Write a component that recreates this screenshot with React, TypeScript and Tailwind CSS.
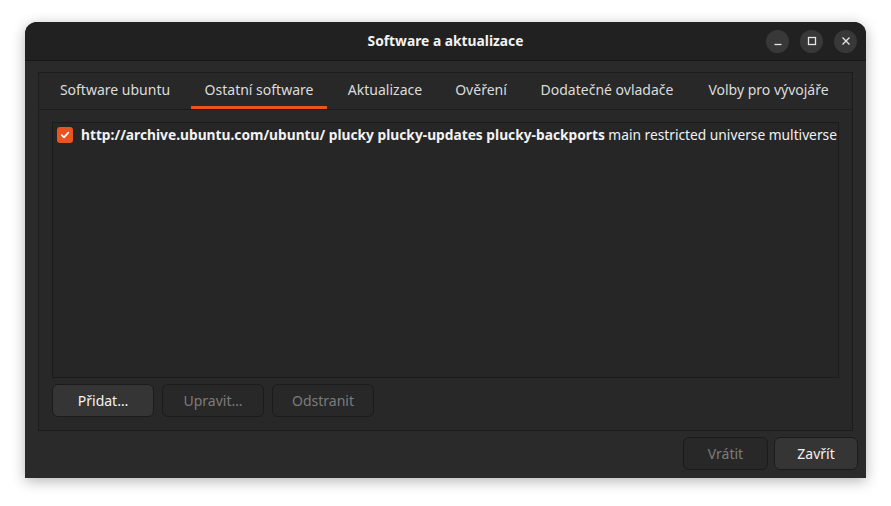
import React from 'react';

const FONT = { fontFamily: '"Noto Sans", "Open Sans", sans-serif' };

// pozice záložek podle referenčního okna (šířky v px)
const TABS: { label: string; w: number }[] = [
  { label: 'Software ubuntu', w: 136 },
  { label: 'Ostatní software', w: 136 },
  { label: 'Aktualizace', w: 100 },
  { label: 'Ověření', w: 76 },
  { label: 'Dodatečné ovladače', w: 160 },
  { label: 'Volby pro vývojáře', w: 147 },
];

function CheckIcon() {
  return (
    <svg width="10" height="10" viewBox="0 0 10 10" fill="none">
      <path d="M1.8 5.2 L4 7.3 L8.3 2.7" stroke="white" strokeWidth="1.7" strokeLinecap="round" strokeLinejoin="round" />
    </svg>
  );
}

function WinButton({ kind }: { kind: 'min' | 'max' | 'close' }) {
  return (
    <div className="w-[23px] h-[23px] rounded-full bg-[#383838] flex items-center justify-center">
      <svg width="10" height="10" viewBox="0 0 10 10" fill="none" stroke="#e6e6e6" strokeWidth="1.3">
        {kind === 'min' && <path d="M1.5 8.5 H8.5" />}
        {kind === 'max' && <rect x="1.5" y="1.5" width="7" height="7" />}
        {kind === 'close' && <path d="M1.5 1.5 L8.5 8.5 M8.5 1.5 L1.5 8.5" />}
      </svg>
    </div>
  );
}

function Btn({ children, disabled, w }: { children: React.ReactNode; disabled?: boolean; w: number }) {
  return (
    <button
      style={{ width: w }}
      className={[
        'h-[33px] rounded-[6px] border border-[#1b1b1b] text-[14px]',
        disabled ? 'bg-[#282828] text-[#7c7c7c]' : 'bg-[#353535] text-[#f2f2f2]',
      ].join(' ')}
    >
      {children}
    </button>
  );
}

export default function App() {
  return (
    <div className="w-[891px] h-[506px] bg-white pt-[22px] pl-[25px]" style={FONT}>
      <div className="w-[841px] h-[456px] rounded-t-[12px] bg-[#2a2a2a] shadow-[0_3px_14px_rgba(0,0,0,0.3)] flex flex-col">
        {/* Titulek okna */}
        <div className="h-[39px] rounded-t-[12px] bg-[#212121] border-b border-[#171717] grid grid-cols-[1fr_auto_1fr] items-center">
          <div />
          <div className="text-[13.8px] font-bold text-[#f2f2f2]">Software a aktualizace</div>
          <div className="flex justify-end gap-[11px] pr-[9px]">
            <WinButton kind="min" />
            <WinButton kind="max" />
            <WinButton kind="close" />
          </div>
        </div>

        {/* Obsah */}
        <div className="flex-1 flex flex-col px-[13px] pt-[11px] pb-[7px]">
          <div className="h-[359px] border border-[#1c1c1c] bg-[#282828] flex flex-col">
            <div className="h-[37px] border-b border-[#1c1c1c] flex pl-[8px] gap-[8px]">
              {TABS.map((t, i) => (
                <div
                  key={t.label}
                  style={{ width: t.w }}
                  className={[
                    'shrink-0 flex items-center justify-center text-[14px] text-[#dcdcdc] border-b-[3px]',
                    i === 1 ? 'border-[#e95420]' : 'border-transparent',
                  ].join(' ')}
                >
                  {t.label}
                </div>
              ))}
            </div>

            <div className="flex-1 flex flex-col px-[13px] pt-[12px] pb-[12px]">
              <div className="h-[256px] border border-[#1b1b1b] bg-[#262626] overflow-hidden">
                <div className="h-[24px] flex items-center pl-[4px] gap-[8px] whitespace-nowrap">
                  <div className="w-[16px] h-[16px] shrink-0 rounded-[3px] bg-[#e95420] flex items-center justify-center">
                    <CheckIcon />
                  </div>
                  <span className="text-[13.75px] text-[#f2f2f2]">
                    <b>http://archive.ubuntu.com/ubuntu/ plucky plucky-updates plucky-backports</b> main restricted
                    universe multiverse
                  </span>
                </div>
              </div>
              <div className="flex gap-[8px] mt-[6px]">
                <Btn w={102}>Přidat…</Btn>
                <Btn w={102} disabled>Upravit…</Btn>
                <Btn w={102} disabled>Odstranit</Btn>
              </div>
            </div>
          </div>

          <div className="flex justify-end gap-[6px] mt-[6px] -mr-[5px]">
            <Btn w={85} disabled>Vrátit</Btn>
            <Btn w={84}>Zavřít</Btn>
          </div>
        </div>
      </div>
    </div>
  );
}
